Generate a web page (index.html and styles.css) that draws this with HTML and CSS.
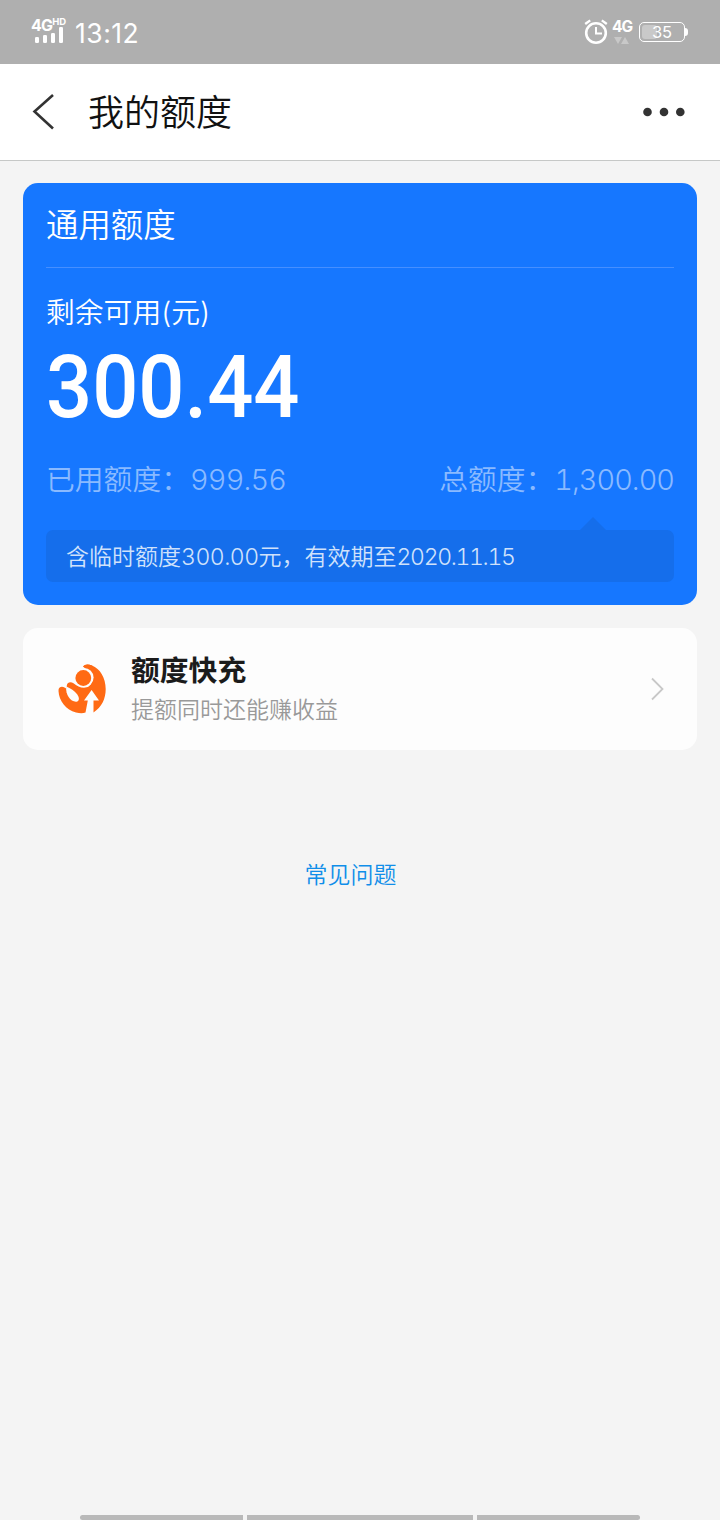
FILE: index.html
```html
<!DOCTYPE html>
<html lang="zh-CN">
<head>
<meta charset="utf-8">
<title>我的额度</title>
<link rel="stylesheet" href="styles.css">
</head>
<body>
<div class="page">
  <div class="status">
    <div class="signal">
      <div class="net"><span>4G</span><sup>HD</sup></div>
      <svg class="bars" width="30" height="17" viewBox="0 0 30 17" fill="#fff"><rect x="0" y="10" width="4" height="6" rx="1.3"/><rect x="8" y="8" width="4" height="8" rx="1.3"/><rect x="16" y="6" width="4" height="10" rx="1.3"/><rect x="24" y="0" width="4" height="16" rx="1.3"/></svg>
    </div>
    <div class="clock">13:12</div>
    <div class="status-right">
      <svg width="24" height="26" viewBox="0 0 24 26" fill="none" stroke="#fff"><circle cx="12" cy="14" r="9.8" stroke-width="2.6"/><path d="M12 8v6.500h6" stroke-width="2"/><path d="M1.200 5 6.200 1.400M17.800 1.400 22.800 5" stroke-width="2.400"/></svg>
      <div class="data"><span>4G</span><svg width="16" height="8" viewBox="0 0 16 8" fill="#c8c8c8"><path d="M0 0h8L4 7zM7 7l4-7 4 7z"/></svg></div>
      <div class="battery"><span class="level"></span><span class="percent">35</span></div>
      <span class="tip"></span>
    </div>
  </div>
  <header class="nav">
    <svg class="back" width="24" height="38" viewBox="0 0 24 38" fill="none" stroke="#333" stroke-width="2.6"><path d="M21 2 2.500 18.500 21 35.500"/></svg>
    <h1>我的额度</h1>
    <svg class="more" width="44" height="12" viewBox="0 0 44 12" fill="#333"><circle cx="5.500" cy="6" r="4.300"/><circle cx="22" cy="6" r="4.300"/><circle cx="38.300" cy="6" r="4.300"/></svg>
  </header>
  <main>
    <section class="quota">
      <h2>通用额度</h2>
      <div class="label">剩余可用(元)</div>
      <div class="amount">300.44</div>
      <div class="totals"><span>已用额度：<b>999.56</b></span><span>总额度：<b>1,300.00</b></span></div>
      <div class="note">含临时额度<span class="sum">300.00</span>元，有效期至<span class="date">2020.11.15</span></div>
    </section>
    <section class="boost">
      <svg class="logo" width="50" height="52" viewBox="0 0 50 52"><path fill="#ff6a14" d="M26 3.500C28 1 31 .8 35 2.500 43 5.500 48.700 15 48.700 26c0 10-4 18-12.200 23.500V37.500H42L34.600 27 27 37.500h3.800L28.500 49.500C26 50.500 23 50.500 19 49.500 9 47 2 38 1.500 28c-.2-3 1.500-4.200 3.500-4.200 2 0 3 1 4.600 2.200L9.800 22.500c.5-3.500 4-4.200 6.700-2.200 4.500 4 11 6 15.500 3 5-4 4.500-12-6-19.800z"/><circle cx="27" cy="14.500" r="9.600" fill="#fdfdfd"/><circle cx="26.300" cy="15" r="7.900" fill="#ff6a14"/><path fill="#ff6a14" d="M26 3.500C28 1 31 .8 35 2.500L40 12C36 6.500 31 4.500 26 3.500z"/><path fill="#fdfdfd" d="M9.300 23.500c4 1.800 8.500 4.500 11 8 2.200 3.300 2 6 0 7C14.500 40 8 32 9.300 23.500z"/></svg>
      <div class="copy"><h3>额度快充</h3><p>提额同时还能赚收益</p></div>
      <svg class="arrow" width="14" height="24" viewBox="0 0 14 24" fill="none" stroke="#c8c8c8" stroke-width="1.800"><path d="M2 1.500 12.500 12 2 22.500"/></svg>
    </section>
    <a class="faq">常见问题</a>
  </main>
  <div class="gesture"><i></i><i></i><i></i></div>
</div>
</body>
</html>
```
FILE: styles.css
```css
* { box-sizing: border-box; }
body { margin: 0; background: #f4f4f4; font-family: Inter, "Noto Sans CJK SC", sans-serif; }
h1, h2, h3, p { margin: 0; font-weight: 350; }
svg { display: block; flex: none; }
.page { width: 720px; height: 1520px; display: flex; flex-direction: column; overflow: hidden; white-space: nowrap; }
.status { height: 64px; background: #afafaf; color: #fff; display: flex; padding-left: 31px; }
.signal { width: 44px; padding-top: 17px; }
.net { display: flex; height: 10px; font: 700 16px/16px Inter, sans-serif; letter-spacing: -0.8px; }
.net sup { font-size: 9.5px; line-height: 10px; letter-spacing: -0.2px; }
.bars { margin-left: 4px; }
.clock { font: 400 26.5px/32px Inter, sans-serif; padding-top: 17px; letter-spacing: 0.5px; }
.status-right { margin-left: auto; display: flex; align-items: flex-start; padding: 19px 32px 0 0; }
.data { width: 20px; margin: 0 7px 0 4px; display: flex; flex-direction: column; align-items: center; font: 700 15.5px/16px Inter, sans-serif; letter-spacing: -1px; }
.data svg { margin-top: 2px; }
.battery { width: 46px; height: 20px; margin-top: 3px; border: 1.5px solid #fff; border-radius: 5px; display: grid; align-items: center; }
.level { grid-area: 1 / 1; width: 15px; height: 14px; margin-left: 2px; border-radius: 3px; background: #c9c9c9; }
.percent { grid-area: 1 / 1; text-align: center; font: 400 16.5px/17px Inter, sans-serif; }
.tip { width: 3px; height: 8px; margin: 9px 0 0 0; border-radius: 0 3px 3px 0; background: #fff; }
.nav { height: 97px; background: #fff; border-bottom: 1px solid #c6c8c7; display: flex; align-items: center; padding: 0 34px 0 32px; }
.nav h1 { flex: 1; margin-left: 32px; padding-top: 1px; font-size: 36px; line-height: 54px; color: #111; }
main { flex: 1; padding: 22px 23px 0; display: flex; flex-direction: column; }
.quota { height: 422px; background: #1677ff; border-radius: 15px; padding: 0 23px; color: #fff; }
.quota h2 { height: 85px; padding-top: 19px; font-size: 32.4px; line-height: 48px; border-bottom: 1px solid #468fff; }
.label { margin-top: 24px; font-size: 28.8px; line-height: 42px; font-weight: 350; }
.amount { height: 90px; margin-top: 6px; font: 500 87px/94px Roboto, sans-serif; transform: scaleX(.934); transform-origin: left; }
.totals { margin-top: 28px; height: 43px; display: flex; justify-content: space-between; font-size: 28.8px; line-height: 43px; font-weight: 350; color: #8abaff; }
.totals b { font-weight: 300; font-variant-numeric: tabular-nums; }
.totals span:first-child b { letter-spacing: -0.8px; }
.totals span:last-child b { letter-spacing: -0.95px; }
.note { position: relative; height: 52px; margin-top: 29px; padding: 1px 0 0 20px; border-radius: 7px; background: #156eeb; color: #d0e2fb; font-size: 23px; line-height: 52px; font-weight: 350; font-variant-numeric: tabular-nums; }
.sum { letter-spacing: -0.5px; }
.date { letter-spacing: -1.35px; }
.note::before { content: ""; position: absolute; right: 68px; top: -13px; border: 13px solid transparent; border-top: 0; border-bottom-color: #156eeb; }
.boost { height: 122px; margin-top: 23px; padding: 0 33px 0 34px; border-radius: 15px; background: #fdfdfd; display: flex; align-items: center; }
.copy { flex: 1; margin-left: 24px; padding-top: 2px; }
.copy h3 { font-size: 28.8px; line-height: 40px; font-weight: 700; color: #1b1b1b; }
.copy p { font-size: 23px; line-height: 38px; color: #999; }
.faq { align-self: center; margin: 108px 19px 0 0; font-size: 23px; line-height: 34px; font-weight: 350; color: #108ee9; }
.gesture { height: 5px; display: grid; grid-template-columns: 163px 226px 163px; gap: 4px; justify-content: center; }
.gesture i { background: #b9b9b9; }
.gesture i:first-child { border-radius: 3px 0 0 3px; }
.gesture i:last-child { border-radius: 0 3px 3px 0; }
```
